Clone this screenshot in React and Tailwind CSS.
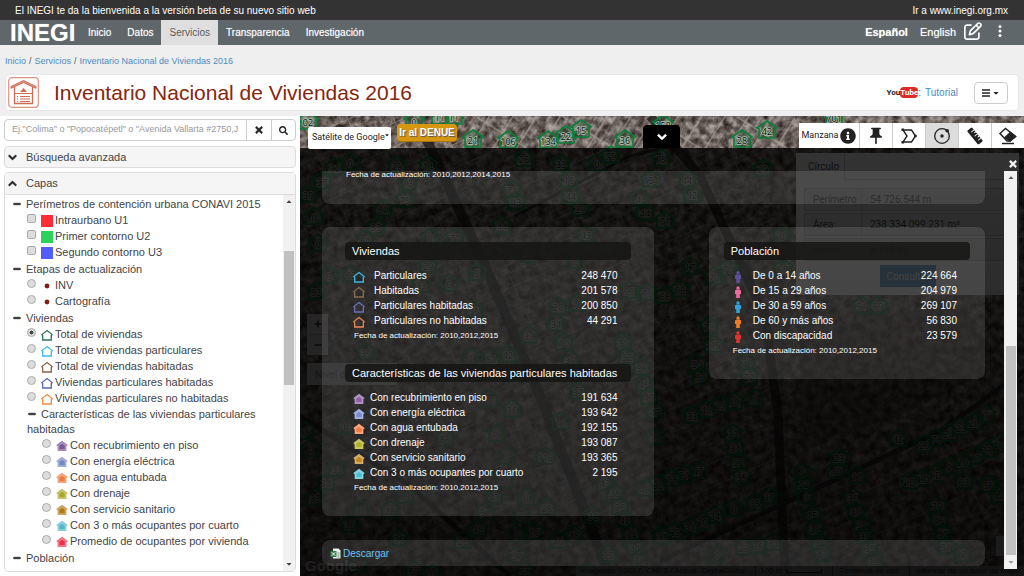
import { useState } from "react";
import { FaCaretDown, FaChevronDown, FaChevronUp, FaInfoCircle, FaMinus, FaPlus, FaRuler, FaSearch, FaTimes } from "react-icons/fa";
import { FaRegPenToSquare } from "react-icons/fa6";
import { MdPushPin } from "react-icons/md";

const NAV = ["Inicio", "Datos", "Servicios", "Transparencia", "Investigación"];

const LAYERS = [
    {
        title: "Perímetros de contención urbana CONAVI 2015",
        type: "checkbox",
        items: [
            { label: "Intraurbano U1", icon: "square", color: "#fd2d38" },
            { label: "Primer contorno U2", icon: "square", color: "#2bd35b" },
            { label: "Segundo contorno U3", icon: "square", color: "#515cfa" },
        ],
    },
    {
        title: "Etapas de actualización",
        type: "radio",
        items: [
            { label: "INV", icon: "dot", color: "#7d2015" },
            { label: "Cartografía", icon: "dot", color: "#7d2015" },
        ],
    },
    {
        title: "Viviendas",
        type: "radio",
        items: [
            { label: "Total de viviendas", icon: "house", color: "#2c7358" },
            { label: "Total de viviendas particulares", icon: "house", color: "#3bb9ea" },
            { label: "Total de viviendas habitadas", icon: "house", color: "#8a6446" },
            { label: "Viviendas particulares habitadas", icon: "house", color: "#5a66b0" },
            { label: "Viviendas particulares no habitadas", icon: "house", color: "#ee8a45" },
        ],
    },
    {
        title: "Características de las viviendas particulares habitadas",
        type: "radio",
        nested: true,
        items: [
            { label: "Con recubrimiento en piso", icon: "solid", color: "#7b5796" },
            { label: "Con energía eléctrica", icon: "solid", color: "#7586c4" },
            { label: "Con agua entubada", icon: "solid", color: "#ee7a3c" },
            { label: "Con drenaje", icon: "solid", color: "#a9a52a" },
            { label: "Con servicio sanitario", icon: "solid", color: "#b27a1c" },
            { label: "Con 3 o más ocupantes por cuarto", icon: "solid", color: "#55b5c9" },
            { label: "Promedio de ocupantes por vivienda", icon: "solid", color: "#f0304f" },
        ],
    },
    { title: "Población", type: "radio", items: [] },
];

const HOUSING = [
    { label: "Particulares", value: "248 470", icon: "house", color: "#41b4e6" },
    { label: "Habitadas", value: "201 578", icon: "house", color: "#8a6d4e" },
    { label: "Particulares habitadas", value: "200 850", icon: "house", color: "#6b74bd" },
    { label: "Particulares no habitadas", value: "44 291", icon: "house", color: "#ee8850" },
];

const FEATURES = [
    { label: "Con recubrimiento en piso", value: "191 634", icon: "solid", color: "#8a5fa8" },
    { label: "Con energía eléctrica", value: "193 642", icon: "solid", color: "#7a8ad0" },
    { label: "Con agua entubada", value: "192 155", icon: "solid", color: "#f5793f" },
    { label: "Con drenaje", value: "193 087", icon: "solid", color: "#aeae20" },
    { label: "Con servicio sanitario", value: "193 365", icon: "solid", color: "#bd8420" },
    { label: "Con 3 o más ocupantes por cuarto", value: "2 195", icon: "solid", color: "#4dbdd0" },
];

const POPULATION = [
    { label: "De 0 a 14 años", value: "224 664", icon: "person", color: "#5b4f9e" },
    { label: "De 15 a 29 años", value: "204 979", icon: "person", color: "#f0679a" },
    { label: "De 30 a 59 años", value: "269 107", icon: "person", color: "#2fa3d8" },
    { label: "De 60 y más años", value: "56 830", icon: "person", color: "#f07c26" },
    { label: "Con discapacidad", value: "23 579", icon: "person", color: "#e23229" },
];

// x, y, label
const MARKERS = [
    [8, 5, "02"], [114, 5, "0"], [140, 0, "11"], [154, 0, "11"], [173, 23, "21"], [208, 24, "106"], [248, 24, "134"],
    [266, 19, "22"], [281, 13, "15"], [325, 23, "36"], [363, 8, "158"], [442, 23, "28"], [467, 14, "42"], [534, 1, "701"],
    [35, 51, "32"], [50, 46, "0"], [97, 49, "29"], [128, 49, "14"], [224, 42, "26"], [261, 47, "33"], [297, 47, "0"],
    [311, 39, "79"], [361, 42, "75"], [22, 65, "37"], [108, 66, "13"], [269, 63, "16"], [351, 63, "154"], [8, 78, "39"],
    [212, 73, "71"], [271, 79, "44"], [341, 82, "43"], [105, 83, "75"], [83, 92, "80"], [216, 85, "43"], [280, 92, "39"],
    [14, 100, "0"], [345, 96, "44"], [463, 52, "29"], [387, 63, "44"], [392, 78, "42"], [365, 104, "71"], [482, 119, "0"],
    [390, 150, "17"], [414, 160, "70"], [428, 152, "70"], [483, 152, "67"], [380, 173, "68"], [365, 179, "68"],
    [562, 189, "51"], [578, 189, "89"], [76, 110, "83"], [202, 109, "44"], [286, 118, "43"], [18, 127, "0"],
    [65, 123, "84"], [130, 121, "0"], [155, 121, "71"], [228, 138, "20"], [276, 144, "0"], [128, 149, "29"],
    [177, 156, "5"], [29, 159, "0"], [51, 158, "62"], [121, 168, "33"], [149, 167, "0"], [16, 175, "53"],
    [329, 174, "96"], [347, 176, "76"], [258, 190, "20"], [277, 187, "10"], [256, 207, "34"], [174, 194, "35"],
    [229, 219, "33"], [264, 226, "10"], [323, 226, "31"], [327, 240, "32"], [66, 236, "35"], [170, 241, "0"],
    [191, 242, "84"], [208, 238, "42"], [270, 243, "36"], [342, 251, "56"], [344, 267, "46"], [349, 280, "47"],
    [355, 295, "47"], [278, 275, "37"], [212, 293, "36"], [189, 283, "0"], [261, 305, "11"], [197, 317, "19"],
    [46, 309, "0"], [145, 322, "86"], [207, 340, "0"], [245, 340, "116"], [5, 315, "0"], [11, 332, "0"],
    [356, 320, "0"], [37, 352, "33"], [26, 366, "34"], [15, 381, "33"], [358, 368, "32"], [204, 364, "41"],
    [305, 366, "43"], [315, 376, "38"], [345, 372, "48"], [105, 379, "73"], [194, 380, "43"], [226, 381, "0"],
    [320, 390, "36"], [247, 391, "26"], [61, 393, "36"], [90, 394, "78"], [186, 395, "52"], [220, 399, "0"],
    [293, 399, "36"], [50, 408, "36"], [325, 403, "42"], [178, 412, "48"], [216, 418, "0"], [234, 415, "16"],
    [274, 418, "48"], [331, 417, "34"], [361, 419, "35"], [99, 422, "36"], [163, 424, "28"], [258, 424, "46"],
    [335, 431, "34"], [217, 439, "57"], [308, 438, "35"], [339, 443, "34"], [114, 454, "67"], [225, 455, "55"],
    [288, 456, "21"], [59, 448, "0"], [133, 457, "45"], [409, 210, "70"], [413, 228, "115"], [447, 245, "31"],
    [397, 247, "50"], [401, 260, "50"], [449, 260, "27"], [455, 282, "0"], [434, 285, "40"], [420, 288, "39"],
    [406, 293, "40"], [392, 299, "33"], [433, 317, "33"], [435, 331, "34"], [439, 345, "52"], [442, 360, "55"],
    [398, 354, "47"], [384, 358, "51"], [372, 362, "18"], [503, 356, "9"], [504, 367, "22"], [536, 354, "40"],
    [539, 341, "23"], [557, 359, "11"], [506, 379, "9"], [598, 322, "42"], [624, 328, "26"], [637, 322, "78"],
    [649, 317, "24"], [661, 311, "23"], [674, 306, "20"], [686, 298, "7"], [699, 328, "10"], [687, 333, "23"],
    [675, 340, "21"], [663, 345, "20"], [649, 350, "0"], [635, 358, "N.D."], [623, 362, "N.D."], [609, 365, "N.D."],
    [664, 365, "63"], [689, 368, "56"], [699, 379, "44"], [469, 380, "37"], [455, 386, "35"], [434, 392, "0"],
    [415, 399, "34"], [402, 405, "36"], [390, 410, "34"], [375, 415, "35"], [363, 420, "35"], [512, 398, "15"],
    [515, 412, "36"], [553, 381, "36"], [556, 395, "40"], [562, 408, "39"], [565, 419, "37"], [637, 389, "39"],
    [639, 403, "46"], [643, 417, "47"], [646, 430, "51"], [662, 437, "12"], [417, 438, "0"], [444, 431, "23"],
    [458, 429, "26"], [473, 426, "34"], [520, 426, "40"], [522, 437, "43"], [570, 431, "35"], [574, 444, "15"],
];

function Symbol({ icon, color, className = "" }) {
    if (icon === "square") {
        return (
            <svg viewBox="0 0 12 12" className={`size-3 ${className}`}>
                <path d="M0 0h12v12H0z" fill={color} />
            </svg>
        );
    }
    if (icon === "dot") {
        return (
            <svg viewBox="0 0 12 12" className={`size-3 ${className}`}>
                <circle cx="6" cy="6" r="2.4" fill={color} />
            </svg>
        );
    }
    if (icon === "person") {
        return (
            <svg viewBox="0 0 12 12" className={`size-3 ${className}`}>
                <circle cx="6" cy="1.9" r="1.7" fill={color} />
                <path d="M4.4 3.6h3.2L9 4.600V8H7.800v4H4.200V8H3V4.600z" fill={color} />
            </svg>
        );
    }
    if (icon === "solid") {
        return (
            <svg viewBox="0 0 12 12" className={`size-3 ${className}`}>
                <path d="M6 .8 11.6 5l-.9 1.3-.4-.2V11H1.7V6.1l-.4.2L.4 5z" fill={color} />
                <path d="M6 .8 11.6 5l-.9 1.3-.4-.2V11H1.7V6.1l-.4.2L.4 5z" fill="#fff" opacity=".3" />
                <path d="M6 3.4 9 5.600V9.600H3V5.600z" fill={color} stroke="#fff" strokeOpacity=".4" strokeWidth=".5" />
            </svg>
        );
    }
    return (
        <svg viewBox="0 0 12 12" className={`size-3 ${className}`}>
            <path d="M6 1.500 11.200 5.600 10.300 6.500V11H1.700V6.500L.8 5.600z" fill="none" stroke={color} strokeWidth="1.300" />
        </svg>
    );
}

function TopBars() {
    return (
        <header>
            <div className="flex h-5 items-center justify-between bg-[#333] pr-4 pl-[15px] text-[10px] text-white">
                <span>El INEGI te da la bienvenida a la versión beta de su nuevo sitio web</span>
                <a href="#inegi">Ir a www.inegi.org.mx</a>
            </div>
            <nav className="flex h-[25px] items-stretch bg-[#5f676a] pl-2.5 text-[10px] text-white [text-shadow:0_0_1px_#fff8]">
                <a href="#home" className="mr-1 flex w-[66px] items-center text-[24px] leading-none font-bold">
                    INEGI
                </a>
                {NAV.map((item) => (
                    <a
                        key={item}
                        href={`#${item}`}
                        className={
                            item === "Servicios"
                                ? "flex items-center bg-[#dedede] px-2 text-[#555]"
                                : "flex items-center px-2"
                        }
                    >
                        {item}
                    </a>
                ))}
                <div className="ml-auto flex items-center gap-3 pr-[22px] text-[11px]">
                    <a href="#es" className="font-bold">Español</a>
                    <a href="#en">English</a>
                    <button type="button" aria-label="Comentarios" className="-ml-1 mb-1">
                        <FaRegPenToSquare className="size-[18px]" />
                    </button>
                    <button type="button" aria-label="Más opciones" className="mb-1 ml-1">
                        <svg viewBox="0 0 4 14" className="h-3.5 w-1" fill="currentColor">
                            <circle cx="2" cy="2.500" r="1.500" />
                            <circle cx="2" cy="7" r="1.500" />
                            <circle cx="2" cy="11.500" r="1.500" />
                        </svg>
                    </button>
                </div>
            </nav>
        </header>
    );
}

function TitleBar() {
    return (
        <div className="bg-[#efefef] px-[5px] pt-[11px] pb-[5px]">
            <div className="flex h-3 items-center gap-[3px] text-[9px] text-[#555]">
                <a href="#inicio" className="text-[#4a8bc2]">Inicio</a>/
                <a href="#servicios" className="text-[#4a8bc2]">Servicios</a>/
                <a href="#inventario" className="text-[#4a8bc2]">Inventario Nacional de Viviendas 2016</a>
            </div>
            <div className="mt-1.5 flex h-[37px] items-center rounded-sm border border-[#e6e6e6] bg-white pr-2.5 pl-0.5">
                <svg viewBox="0 0 31 31" className="size-[31px]" fill="none" stroke="#cf6a55">
                    <rect x=".7" y=".7" width="29.600" height="29.600" rx="3" stroke="#dc9384" strokeWidth="1.200" />
                    <path d="M3 9.500 15.500 3.500 28 9.500v1.800L15.500 5.600 3 11.300z" fill="#e0988a" />
                    <path d="M6.500 10v16.500h18V10" strokeWidth="1.300" />
                    <path d="M15.500 11l3.500 4h-7z" fill="#cf6a55" stroke="none" />
                    <path d="M6.500 16.500h18M9 19.500h1M12 19.500h10M9 22h1M12 22h10M9 24.500h1M12 24.500h10" strokeWidth="1.100" />
                </svg>
                <h1 className="ml-[15px] text-[21px] leading-none text-[#86260f]">Inventario Nacional de Viviendas 2016</h1>
                <a href="#tutorial" className="ml-auto flex items-center text-[10px] text-[#4a8bc2]">
                    <span className="flex items-center font-[Roboto,sans-serif] text-[8px] leading-[11px] font-bold text-[#222]">
                        You<span className="rounded-sm bg-[#dc2a26] text-white">Tube</span>
                    </span>
                    :<span className="ml-1">Tutorial</span>
                </a>
                <button
                    type="button"
                    aria-label="Menú"
                    className="ml-4 flex h-[22px] w-[34px] items-center justify-center gap-0.5 rounded-sm border border-[#ccc] bg-white text-[#222]"
                >
                    <svg viewBox="0 0 8 8" className="size-2" stroke="currentColor" strokeWidth="1.300">
                        <path d="M0 1h8M0 4h8M0 7h8" />
                    </svg>
                    <FaCaretDown className="size-2" />
                </button>
            </div>
        </div>
    );
}

function LayerGroup({ group, selected, onSelect }) {
    return (
        <section className="pb-px">
            <h3 className={group.nested ? "pl-[22px] leading-[15px]" : "pl-[7px] leading-4"}>
                <FaMinus className="mr-[5px] inline size-2 stroke-current stroke-[40px] align-baseline text-[#222]" />
                {group.nested ? (
                    <>
                        Características de las viviendas particulares
                        <span className="-ml-px block">habitadas</span>
                    </>
                ) : (
                    group.title
                )}
            </h3>
            <ul className={group.nested ? "pl-[36px]" : "pl-[21px]"}>
                {group.items.map((item) => (
                    <li key={item.label}>
                        <label className="flex h-4 items-center">
                            <input
                                type={group.type}
                                name={group.type === "radio" ? "capa" : item.label}
                                checked={group.type === "radio" ? selected === item.label : undefined}
                                onChange={group.type === "radio" ? () => onSelect(item.label) : undefined}
                                className={
                                    group.type === "radio"
                                        ? "mb-1 size-[9px] appearance-none rounded-full border border-[#aaa] bg-[#ddd] checked:bg-[radial-gradient(#444_35%,#ddd_45%)]"
                                        : "mb-1 size-[9px] appearance-none rounded-xs border border-[#aaa] bg-[#ddd] checked:bg-[#444]"
                                }
                            />
                            <Symbol icon={item.icon} color={item.color} className="mt-0.5 mr-0.5 ml-[5px]" />
                            {item.label}
                        </label>
                    </li>
                ))}
            </ul>
        </section>
    );
}

function Sidebar() {
    const [selected, setSelected] = useState("Total de viviendas");

    return (
        <aside className="flex w-[300px] shrink-0 flex-col bg-white px-1 pt-[3px] pb-1 text-[#444]">
            {/* Search */}
            <form className="flex h-[22px] overflow-hidden rounded-sm border border-[#ccc]" onSubmit={(e) => e.preventDefault()}>
                <input
                    type="text"
                    aria-label="Buscar"
                    placeholder={'Ej."Colima" o "Popocatépetl" o "Avenida Vallarta #2750,Jardines"'}
                    className="min-w-0 flex-1 pl-[7px] text-[9px] placeholder:text-[#999]"
                />
                <span className="w-2" />
                <button type="button" aria-label="Limpiar" className="flex w-[25px] items-center justify-center border-l border-[#ccc] text-[#222]">
                    <FaTimes className="size-2.5 stroke-current stroke-[30px]" />
                </button>
                <button type="submit" aria-label="Buscar dirección" className="flex w-6 items-center justify-center border-l border-[#ccc] text-[#222]">
                    <FaSearch className="size-[9px]" />
                </button>
            </form>

            {/* Accordion */}
            <button type="button" className="mt-[5px] flex h-[22px] shrink-0 items-center gap-[9px] rounded-sm border border-[#ddd] bg-[#f5f5f5] px-[3px] text-[11px]">
                <FaChevronDown className="size-[9px] stroke-current stroke-[50px] text-[#222]" />
                Búsqueda avanzada
            </button>
            <div className="mt-1 flex min-h-0 flex-1 flex-col rounded-sm border border-[#ddd]">
                <button type="button" className="flex h-[22px] shrink-0 items-center gap-[9px] border-b border-[#ddd] bg-[#f5f5f5] px-[3px] text-[11px]">
                    <FaChevronUp className="size-[9px] stroke-current stroke-[50px] text-[#222]" />
                    Capas
                </button>
                <div className="flex min-h-0 flex-1">
                    <div className="min-w-0 flex-1 overflow-hidden pt-px pl-px text-[11px] whitespace-nowrap">
                        {LAYERS.map((group) => (
                            <LayerGroup key={group.title} group={group} selected={selected} onSelect={setSelected} />
                        ))}
                    </div>
                    <div className="flex w-3 flex-col items-center bg-[#f1f1f1] text-[#444]">
                        <FaCaretDown className="mt-[3px] size-2 rotate-180" />
                        <div className="mt-[45px] h-[134px] w-2.5 bg-[#c1c1c1]" />
                        <FaCaretDown className="mt-auto mb-[3px] size-2" />
                    </div>
                </div>
            </div>
        </aside>
    );
}

function SatelliteMap() {
    return (
        <svg viewBox="0 0 724 460" preserveAspectRatio="xMidYMin slice" className="absolute inset-0 size-full">
            <defs>
                <filter id="grain" x="0" y="0" width="100%" height="100%" colorInterpolationFilters="sRGB">
                    <feTurbulence type="fractalNoise" baseFrequency=".13" numOctaves="4" seed="8" />
                    <feColorMatrix values=".8 0 0 0 .03  .8 0 0 0 -.01  .8 0 0 0 -.03  0 0 0 0 1" />
                </filter>
                <pattern id="blocks" width="42" height="22" patternUnits="userSpaceOnUse" patternTransform="rotate(-24)">
                    <path d="M0 0h42M0 0v22" stroke="#b5aca4" strokeWidth="2" opacity=".5" />
                    <path d="M0 11h42M14 2v20M28 2v20" stroke="#2e2926" opacity=".5" />
                </pattern>
                <pattern id="blocksEast" width="46" height="20" patternUnits="userSpaceOnUse" patternTransform="rotate(-58)">
                    <path d="M0 0h46M0 0v20" stroke="#b5aca4" strokeWidth="3" opacity=".6" />
                    <path d="M0 10h46" stroke="#3e3833" opacity=".6" />
                </pattern>
            </defs>
            <path d="M0 0h724v460H0z" filter="url(#grain)" />
            <path d="M0 0h165l150 460H0z" fill="url(#blocks)" />
            <path d="M165 32h310l20 428H315z" fill="url(#blocks)" />
            <path d="M135 0h360v32H145z" fill="url(#blocksEast)" />
            <path d="M480 370l244-80v170H480z" fill="url(#blocks)" />
            <g fill="none" stroke="#1c1817" opacity=".75">
                <path d="M125 20 185 150 240 280 310 460" strokeWidth="10" />
                <path d="M350 0 400 60 465 200 478 300 485 460" strokeWidth="9" />
                <path d="M0 300 110 370 210 460" strokeWidth="5" />
                <path d="M360 445 500 380 640 315 724 255" strokeWidth="5" />
                <path d="M215 100 330 40 372 30" strokeWidth="3" />
            </g>
            <path d="M500 230l60-30 100-10 40 60-100 50-100 30z" fill="#2f2a27" opacity=".3" />
            {MARKERS.map(([x, y, label]) => (
                <g key={`${x}-${y}`} transform={`translate(${x} ${y})`}>
                    <path
                        d="M0-9 10-2 8-1V8H-8V-1L-10-2z"
                        fill="#15803d"
                        fillOpacity=".15"
                        stroke="#087f38"
                        strokeWidth="1.600"
                    />
                    <text
                        y="5"
                        textAnchor="middle"
                        fontFamily="Noto Sans, sans-serif"
                        fontSize="9"
                        fill="#111"
                        stroke="#a9c4af"
                        strokeWidth="1.500"
                        paintOrder="stroke"
                    >
                        {label}
                    </text>
                </g>
            ))}
        </svg>
    );
}

function MeasurePanel() {
    return (
        <div className="absolute top-[37px] right-[5px] w-[223px] bg-white font-[Roboto,sans-serif] text-[10px] text-[#555]">
            <div className="flex h-[27px]">
                <span className="w-[49px] border-r border-[#ccc] pt-1.5 pl-3">Círculo</span>
                <span className="flex-1 border-b border-[#ccc]" />
            </div>
            <dl className="mt-2 ml-2">
                {[
                    ["Perímetro", "54 726.544 m"],
                    ["Área:", "238 334 099.231 m²"],
                    ["Radio:", "8 710 m"],
                ].map(([name, value]) => (
                    <div key={name} className="mb-0.5 flex h-[23px] items-center border border-[#ccc] bg-[#eee]">
                        <dt className="w-14 pl-2">{name}</dt>
                        <dd className="flex h-full flex-1 items-center border-l border-[#ccc] pl-2">{value}</dd>
                    </div>
                ))}
            </dl>
            <button type="button" className="mt-0.5 mb-2 ml-[84px] h-[22px] w-14 bg-[#337ab7] text-[#ddd]">
                Consultar
            </button>
        </div>
    );
}

function MapControls() {
    return (
        <>
            <div className="absolute top-[198px] left-[7px] flex w-[21px] flex-col bg-[#ddd] text-[#333]">
                <button type="button" aria-label="Acercar" className="flex h-[21px] items-center justify-center border-b border-[#bbb]">
                    <FaPlus className="size-2" />
                </button>
                <button type="button" aria-label="Alejar" className="flex h-5 items-center justify-center">
                    <FaMinus className="size-2" />
                </button>
            </div>
            <span className="absolute top-[247px] left-[7px] flex h-[22px] w-[90px] items-center bg-[#ddd] pl-2 font-[Roboto,sans-serif] text-[10px] text-[#777]">
                Nivel de
            </span>
            <span className="absolute bottom-0 left-[5px] text-[15px] leading-5 font-bold text-white">Google</span>
            <span className="absolute right-[19px] bottom-5 h-5 w-[9px] bg-[#ddd]" />
            <div className="absolute right-0 bottom-0 flex h-2.5 items-center gap-2.5 bg-[#bbb]/80 px-1 text-[8px] text-[#333]">
                <span>Imágenes ©2017, CNES / Airbus, DigitalGlobe</span>
                <span className="flex items-center gap-1 border-l border-[#555] pl-1">
                    100 m <span className="h-1 w-9 border-x border-b border-[#222]" />
                </span>
                <span className="border-l border-[#555] pl-1.5">Términos de uso</span>
                <span className="border-l border-[#555] pl-1.5">Informar de un error de Maps</span>
            </div>
        </>
    );
}

function MapToolbar() {
    const tool = "flex w-[33px] items-center justify-center border-l border-[#ccc]";

    return (
        <div className="absolute inset-x-0 top-[7px] flex h-[25px] items-start pl-2 text-[#222]">
            <div className="relative">
                <select
                    aria-label="Mapa base"
                    className="h-[22px] w-[83px] appearance-none rounded-xs bg-white pl-1 font-[Roboto,sans-serif] text-[9px]"
                >
                    <option>Satélite de Google</option>
                </select>
                <FaCaretDown className="pointer-events-none absolute top-[9px] right-px size-1.5" />
            </div>
            <button
                type="button"
                className="mt-px ml-1.5 h-[18px] w-[60px] rounded-sm border-b border-[#a87200] bg-[#d6960f] text-[10px] leading-none font-bold text-white [text-shadow:1px_1px_1px_#555]"
            >
                Ir al DENUE
            </button>
            <button type="button" aria-label="Ocultar panel" className="mt-0.5 ml-[186px] flex h-[23px] w-[37px] items-center justify-center rounded-t-sm bg-black text-white">
                <FaChevronDown className="size-2.5 stroke-current stroke-[50px]" />
            </button>
            <div className="ml-auto flex h-full bg-white">
                <button type="button" className="flex w-[60px] items-center justify-center gap-0.5 font-[Roboto,sans-serif] text-[9px]">
                    Manzana <FaInfoCircle className="size-4" />
                </button>
                <button type="button" aria-label="Marcador" className={tool}>
                    <MdPushPin className="size-5" />
                </button>
                <button type="button" aria-label="Polígono" className={tool}>
                    <svg viewBox="0 0 18 18" className="size-[18px]" fill="none" stroke="currentColor" strokeWidth="1.400">
                        <path d="M3 3h8.500L15.500 9l-4 6H3l4-6z" />
                        <path d="M1.500 1.500h2.600v2.600H1.500zM1.500 13.900h2.600v2.600H1.500zM14 7.700h2.600v2.600H14z" fill="currentColor" stroke="none" />
                    </svg>
                </button>
                <button type="button" aria-label="Círculo" className="flex w-[33px] items-center justify-center border-l border-[#ccc] bg-[#dcdcdc]">
                    <svg viewBox="0 0 18 18" className="size-[18px]" fill="none" stroke="currentColor" strokeWidth="1.300">
                        <circle cx="9" cy="9" r="7.300" />
                        <circle cx="9" cy="9" r="1.700" fill="currentColor" stroke="none" />
                        <circle cx="14.200" cy="3.800" r="1.800" fill="currentColor" stroke="none" />
                    </svg>
                </button>
                <button type="button" aria-label="Medir distancia" className={tool}>
                    <FaRuler className="size-[18px] rotate-80" />
                </button>
                <button type="button" aria-label="Borrar" className={tool}>
                    {/* Eraser standing on a short line */}
                    <svg viewBox="0 0 20 18" className="h-[18px] w-5" fill="none" stroke="currentColor" strokeWidth="1.500">
                        <path d="M2 6.500 7.500 1.500 17.500 9.500 12 14H9z" />
                        <path d="M7 10.500 12.500 5.500 17.500 9.500 12 14z" fill="currentColor" />
                        <path d="M4 16.500h12" />
                    </svg>
                </button>
            </div>
        </div>
    );
}

function StatsTable({ title, rows, compact }) {
    return (
        <section className="pb-[21px]">
            <h2 className="h-[18px] rounded-sm bg-[#151514]/85 pl-[7px] text-[11px] leading-[18px]">{title}</h2>
            <table className="mt-2 w-full text-[10px]">
                <tbody>
                    {rows.map((row) => (
                        <tr key={row.label} className="h-[15px]">
                            <td className={compact ? "w-[25px] p-0 pl-2" : "w-[29px] p-0 pl-2"}>
                                <Symbol icon={row.icon} color={row.color} className="mt-0.5" />
                            </td>
                            <td className="p-0 leading-[15px]">{row.label}</td>
                            <td className="p-0 pr-[13px] text-right leading-[15px]">{row.value}</td>
                        </tr>
                    ))}
                </tbody>
            </table>
            <p className="pl-[9px] text-[8px] leading-[15px]">Fecha de actualización: 2010,2012,2015</p>
        </section>
    );
}

function ResultsOverlay() {
    return (
        <div className="absolute inset-x-0 top-8 bottom-0 flex bg-linear-to-b from-black/80 to-black/88 pb-[7px] text-white">
            <div className="min-w-0 flex-1 overflow-hidden pt-[23px] pr-[19px] pl-[22px]">
                <div className="h-[33px] rounded-b-lg bg-white/12 pl-6 text-[8px] leading-[7px]">
                    Fecha de actualización: 2010,2012,2014,2015
                </div>
                <div className="mt-[23px] flex items-start justify-between">
                    <div className="w-1/2 rounded-lg bg-white/12 px-[23px] pt-[15px]">
                        <StatsTable title="Viviendas" rows={HOUSING} />
                        <StatsTable title="Características de las viviendas particulares habitadas" rows={FEATURES} compact />
                    </div>
                    <div className="w-5/12 rounded-lg bg-white/12 px-[15px] pt-[15px]">
                        <StatsTable title="Población" rows={POPULATION} />
                    </div>
                </div>
                <div className="mt-6 flex h-[26px] items-center rounded-lg bg-white/12 pl-2">
                    <a href="#descargar" className="flex items-center gap-0.5 text-[10px] text-[#6ec3f5]">
                        <svg viewBox="0 0 11 11" className="size-[11px]">
                            <path d="M3 .5h5.500L10.500 2.500v8H3z" fill="#eee" />
                            <path d="M.5 3h6v6h-6z" fill="#2e7d4a" />
                            <path d="M1.800 4.300l3.400 3.400M5.200 4.300 1.800 7.700" stroke="#fff" />
                            <path d="M7.500 5h2M7.500 7h2M7.500 9h2" stroke="#57966b" />
                        </svg>
                        Descargar
                    </a>
                </div>
            </div>
            <div className="mr-[7px] flex w-[13px] flex-col items-center">
                <button type="button" aria-label="Cerrar" className="flex h-[23px] items-center pt-2">
                    <FaTimes className="ml-1 size-2.5 stroke-current stroke-[30px]" />
                </button>
                <div className="flex w-full flex-1 flex-col items-center bg-[#f1f1f1] text-[#555]">
                    <FaCaretDown className="mt-[3px] size-2 rotate-180" />
                    <div className="mt-auto h-[209px] w-2.5 bg-[#c1c1c1]" />
                    <FaCaretDown className="my-[3px] size-2 text-[#999]" />
                </div>
            </div>
        </div>
    );
}

export default function App() {
    return (
        <div className="flex h-screen flex-col overflow-hidden bg-white font-['Liberation_Sans',Arial,sans-serif] leading-normal">
            <TopBars />
            <TitleBar />
            <main className="flex min-h-0 flex-1">
                <Sidebar />
                <div className="relative min-w-0 flex-1 overflow-hidden bg-[#4d4641]">
                    <SatelliteMap />
                    <MapControls />
                    <MeasurePanel />
                    <ResultsOverlay />
                    <MapToolbar />
                </div>
            </main>
        </div>
    );
}
